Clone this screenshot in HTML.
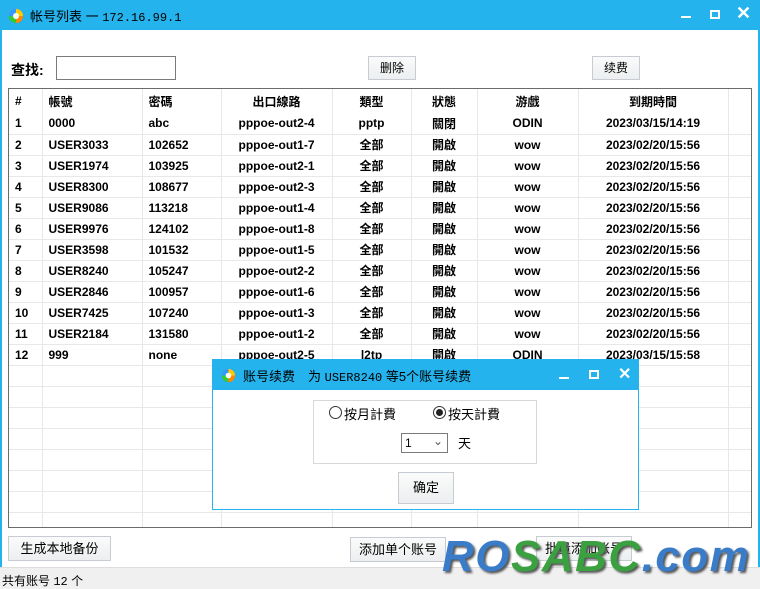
<!DOCTYPE html>
<html><head><meta charset="utf-8"><style>
*{margin:0;padding:0;box-sizing:border-box}
body{width:760px;height:589px;overflow:hidden;background:#fff;font-family:"Liberation Sans","Noto Sans CJK SC",sans-serif;font-size:12px;color:#000;position:relative}
.abs{position:absolute}
.tb{left:0;top:0;width:760px;height:30px;background:#24b3ec}
.win{left:0;top:30px;width:760px;height:537px;border-left:2px solid #24b3ec;border-right:2px solid #24b3ec}
.btn{position:absolute;background:linear-gradient(#fbfbfb,#eceeef);border:1px solid #c6ccd2;font-size:12px;text-align:center}
table{border-collapse:collapse;table-layout:fixed;font-weight:bold;font-size:12px}
td{height:21px;border-right:1px solid #e8e8e8;border-bottom:1px solid #e8e8e8;padding:0;white-space:nowrap;overflow:hidden}
tr.h td{height:24px;font-weight:bold;border-bottom:none}
.c{text-align:center}.l{padding-left:6px}
.status{left:0;top:567px;width:760px;height:22px;background:#f0f0f0;border-top:1px solid #ddd;font-size:12px;padding:4px 2px}
.wm{left:442px;top:533px;font-size:44px;line-height:48px;font-weight:bold;font-style:italic;font-family:"Liberation Sans",sans-serif;text-shadow:2px 2px 2px #555;z-index:5;letter-spacing:1.5px}
</style></head><body>
<div class="abs tb">
 <svg class="abs" style="left:8px;top:8px" width="16" height="16" viewBox="0 0 16 16"><circle cx="8" cy="8" r="7" fill="#f44"/><path d="M8 1A7 7 0 0 1 15 8L8 8Z" fill="#fc0"/><path d="M8 8L15 8A7 7 0 0 1 8 15Z" fill="#f80"/><path d="M8 8L8 15A7 7 0 0 1 1 8Z" fill="#3c3"/><path d="M8 8L1 8A7 7 0 0 1 8 1Z" fill="#39f"/><circle cx="8" cy="8" r="3" fill="#fff"/></svg>
 <div class="abs" style="left:30px;top:6px;color:#000;font-size:13px">帐号列表 一 <span style="font-family:'Liberation Mono',monospace;font-size:12px">172.16.99.1</span></div>
 <div class="abs" style="left:681px;top:16px;width:10px;height:2px;background:#fff"></div>
 <div class="abs" style="left:710px;top:10px;width:10px;height:9px;border:2px solid #fff"></div>
 <div class="abs" style="left:736px;top:3px;color:#fff;font-size:18px;font-weight:bold">✕</div>
</div>
<div class="abs win"></div>
<div class="abs" style="left:11px;top:60px;font-size:14px;font-weight:bold">查找:</div>
<div class="abs" style="left:56px;top:56px;width:120px;height:24px;border:1px solid #7a7a7a"></div>
<div class="btn" style="left:368px;top:56px;width:48px;height:24px;line-height:22px">删除</div>
<div class="btn" style="left:592px;top:56px;width:48px;height:24px;line-height:22px">续费</div>
<div class="abs" style="left:8px;top:88px;width:744px;height:440px;border:1px solid #6b6b6b;overflow:hidden">
<table style="width:742px">
<colgroup><col style="width:33px"><col style="width:100px"><col style="width:79px"><col style="width:111px"><col style="width:79px"><col style="width:66px"><col style="width:101px"><col style="width:150px"><col style="width:23px"></colgroup>
<tr class="h"><td class="l">#</td><td class="l">帳號</td><td class="l">密碼</td><td class="c">出口線路</td><td class="c">類型</td><td class="c">狀態</td><td class="c">游戲</td><td class="c">到期時間</td><td></td></tr>
<tr><td class="l">1</td><td class="l">0000</td><td class="l">abc</td><td class="c">pppoe-out2-4</td><td class="c">pptp</td><td class="c">關閉</td><td class="c">ODIN</td><td class="c">2023/03/15/14:19</td><td></td></tr>
<tr><td class="l">2</td><td class="l">USER3033</td><td class="l">102652</td><td class="c">pppoe-out1-7</td><td class="c">全部</td><td class="c">開啟</td><td class="c">wow</td><td class="c">2023/02/20/15:56</td><td></td></tr>
<tr><td class="l">3</td><td class="l">USER1974</td><td class="l">103925</td><td class="c">pppoe-out2-1</td><td class="c">全部</td><td class="c">開啟</td><td class="c">wow</td><td class="c">2023/02/20/15:56</td><td></td></tr>
<tr><td class="l">4</td><td class="l">USER8300</td><td class="l">108677</td><td class="c">pppoe-out2-3</td><td class="c">全部</td><td class="c">開啟</td><td class="c">wow</td><td class="c">2023/02/20/15:56</td><td></td></tr>
<tr><td class="l">5</td><td class="l">USER9086</td><td class="l">113218</td><td class="c">pppoe-out1-4</td><td class="c">全部</td><td class="c">開啟</td><td class="c">wow</td><td class="c">2023/02/20/15:56</td><td></td></tr>
<tr><td class="l">6</td><td class="l">USER9976</td><td class="l">124102</td><td class="c">pppoe-out1-8</td><td class="c">全部</td><td class="c">開啟</td><td class="c">wow</td><td class="c">2023/02/20/15:56</td><td></td></tr>
<tr><td class="l">7</td><td class="l">USER3598</td><td class="l">101532</td><td class="c">pppoe-out1-5</td><td class="c">全部</td><td class="c">開啟</td><td class="c">wow</td><td class="c">2023/02/20/15:56</td><td></td></tr>
<tr><td class="l">8</td><td class="l">USER8240</td><td class="l">105247</td><td class="c">pppoe-out2-2</td><td class="c">全部</td><td class="c">開啟</td><td class="c">wow</td><td class="c">2023/02/20/15:56</td><td></td></tr>
<tr><td class="l">9</td><td class="l">USER2846</td><td class="l">100957</td><td class="c">pppoe-out1-6</td><td class="c">全部</td><td class="c">開啟</td><td class="c">wow</td><td class="c">2023/02/20/15:56</td><td></td></tr>
<tr><td class="l">10</td><td class="l">USER7425</td><td class="l">107240</td><td class="c">pppoe-out1-3</td><td class="c">全部</td><td class="c">開啟</td><td class="c">wow</td><td class="c">2023/02/20/15:56</td><td></td></tr>
<tr><td class="l">11</td><td class="l">USER2184</td><td class="l">131580</td><td class="c">pppoe-out1-2</td><td class="c">全部</td><td class="c">開啟</td><td class="c">wow</td><td class="c">2023/02/20/15:56</td><td></td></tr>
<tr><td class="l">12</td><td class="l">999</td><td class="l">none</td><td class="c">pppoe-out2-5</td><td class="c">l2tp</td><td class="c">開啟</td><td class="c">ODIN</td><td class="c">2023/03/15/15:58</td><td></td></tr>
<tr><td></td><td></td><td></td><td></td><td></td><td></td><td></td><td></td><td></td></tr>
<tr><td></td><td></td><td></td><td></td><td></td><td></td><td></td><td></td><td></td></tr>
<tr><td></td><td></td><td></td><td></td><td></td><td></td><td></td><td></td><td></td></tr>
<tr><td></td><td></td><td></td><td></td><td></td><td></td><td></td><td></td><td></td></tr>
<tr><td></td><td></td><td></td><td></td><td></td><td></td><td></td><td></td><td></td></tr>
<tr><td></td><td></td><td></td><td></td><td></td><td></td><td></td><td></td><td></td></tr>
<tr><td></td><td></td><td></td><td></td><td></td><td></td><td></td><td></td><td></td></tr>
<tr><td></td><td></td><td></td><td></td><td></td><td></td><td></td><td></td><td></td></tr>
<tr><td></td><td></td><td></td><td></td><td></td><td></td><td></td><td></td><td></td></tr>
</table></div>
<!-- dialog -->
<div class="abs" style="left:212px;top:359px;width:427px;height:151px;border:1px solid #24b3ec;background:#fff">
 <div class="abs" style="left:0;top:0;width:425px;height:30px;background:#24b3ec">
  <svg class="abs" style="left:8px;top:8px" width="15" height="15" viewBox="0 0 16 16"><circle cx="8" cy="8" r="7" fill="#f44"/><path d="M8 1A7 7 0 0 1 15 8L8 8Z" fill="#fc0"/><path d="M8 8L15 8A7 7 0 0 1 8 15Z" fill="#f80"/><path d="M8 8L8 15A7 7 0 0 1 1 8Z" fill="#3c3"/><path d="M8 8L1 8A7 7 0 0 1 8 1Z" fill="#39f"/><circle cx="8" cy="8" r="3" fill="#fff"/></svg>
  <div class="abs" style="left:30px;top:6px;font-size:13px">账号续费　为 <span style="font-family:'Liberation Mono',monospace;font-size:12px">USER8240</span> 等5个账号续费</div>
  <div class="abs" style="left:346px;top:17px;width:10px;height:2px;background:#fff"></div>
  <div class="abs" style="left:376px;top:10px;width:10px;height:9px;border:2px solid #fff"></div>
  <div class="abs" style="left:405px;top:4px;color:#fff;font-size:16px;font-weight:bold">✕</div>
 </div>
 <div class="abs" style="left:100px;top:40px;width:224px;height:64px;border:1px solid #d8d8d8"></div>
 <div class="abs" style="left:116px;top:46px;width:13px;height:13px;border:1px solid #333;border-radius:50%"></div>
 <div class="abs" style="left:131px;top:44px;font-size:13px">按月計費</div>
 <div class="abs" style="left:220px;top:46px;width:13px;height:13px;border:1px solid #333;border-radius:50%"><div style="margin:2px;width:7px;height:7px;border-radius:50%;background:#222"></div></div>
 <div class="abs" style="left:235px;top:44px;font-size:13px">按天計費</div>
 <div class="abs" style="left:188px;top:73px;width:47px;height:20px;border:1px solid #7a7a7a;font-size:12px;padding:2px 3px">1<span style="position:absolute;right:4px;top:0;color:#555">⌄</span></div>
 <div class="abs" style="left:245px;top:73px;font-size:13px">天</div>
 <div class="btn" style="left:185px;top:112px;width:56px;height:32px;line-height:30px;font-size:13px">确定</div>
</div>
<div class="btn" style="left:8px;top:536px;width:103px;height:25px;line-height:23px;font-size:13px">生成本地备份</div>
<div class="btn" style="left:350px;top:537px;width:96px;height:25px;line-height:23px;font-size:13px">添加单个账号</div>
<div class="btn" style="left:536px;top:536px;width:96px;height:25px;line-height:23px;font-size:13px">批量添加账号</div>
<div class="abs status">共有账号 <span style="font-family:'Liberation Mono',monospace">12</span> 个</div>
<div class="abs wm"><span style="color:#3a7cc8">RO</span><span style="color:#3aa040">SABC</span><span style="color:#3a7cc8">.com</span></div>
</body></html>
